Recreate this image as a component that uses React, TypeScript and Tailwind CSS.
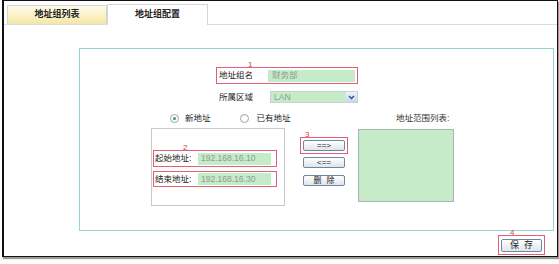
import React from 'react';

const font = "font-['Liberation_Sans','Noto_Sans_CJK_SC',sans-serif]";

const Mark: React.FC<{ n: string; className: string }> = ({ n, className }) => (
  <span className={`absolute text-[8px] leading-none text-[#e03a3a] ${className}`}>{n}</span>
);

const Btn: React.FC<{ children: React.ReactNode; className?: string }> = ({ children, className = '' }) => (
  <div
    className={`flex items-center justify-center rounded-[2px] border border-[#6f87a0] bg-gradient-to-b from-white to-[#dfe5ec] text-[8px] leading-none text-[#222] ${className}`}
  >
    {children}
  </div>
);

const Radio: React.FC<{ checked?: boolean }> = ({ checked }) => (
  <span className="flex h-[9px] w-[9px] items-center justify-center rounded-full border border-[#9aa3aa] bg-white">
    {checked && <span className="h-[3px] w-[3px] rounded-full bg-[#3aa040]" />}
  </span>
);

const App: React.FC = () => {
  return (
    <div className={`h-[264px] w-[559px] whitespace-nowrap bg-white ${font} text-[8.5px] text-[#222]`}>
      <div className="ml-[2px] h-[257px] w-[556px] border border-l-2 border-[#111] shadow-[1px_2px_1px_#9a9a9a]">
        {/* tabs */}
        <div className="flex h-[24px] items-end border-b border-[#dcdcdc] pl-[3px]">
          <div className="flex h-[19px] w-[100px] items-center justify-center border border-b-0 border-[#d4d4d4] bg-gradient-to-b from-[#fffcea] to-[#f3e7a6] text-[9px] font-bold">
            地址组列表
          </div>
          <div className="-mb-px flex h-[21px] w-[101px] items-center justify-center border border-b-0 border-[#d4d4d4] bg-white text-[9px] font-bold">
            地址组配置
          </div>
        </div>

        {/* form panel */}
        <div className="ml-[75px] mt-[23px] h-[183px] w-[475px] border border-[#96d3d3]">
          <div className="relative ml-[136px] mt-[18px] flex h-[17px] w-[142px] items-center border border-[#e0607a]">
            <Mark n="1" className="-top-[7px] left-[31px]" />
            <span className="w-[51px] pl-[2px]">地址组名</span>
            <div className="flex h-[12px] w-[87px] items-center bg-[#c6ebc8] pl-[4px] text-[#8a9c90]">财务部</div>
          </div>

          <div className="ml-[139px] mt-[7px] flex h-[12px] items-center">
            <span className="w-[51px]">所属区域</span>
            <div className="flex h-[12px] w-[88px] items-center border border-[#c5d6c8] bg-[#c6ebc8] pl-[3px] text-[#8a9c90]">
              <span className="flex-1">LAN</span>
              <span className="flex h-[10px] w-[11px] items-center justify-center bg-gradient-to-b from-[#eef3fb] to-[#c8d6ee]">
                <svg width="7" height="5" viewBox="0 0 7 5">
                  <path d="M1 1 L3.5 3.5 L6 1" fill="none" stroke="#2b4f8c" strokeWidth="1.4" />
                </svg>
              </span>
            </div>
          </div>

          <div className="mt-[10px] flex items-start">
            {/* left column */}
            <div className="ml-[71px] w-[134px]">
              <div className="flex h-[10px] items-center">
                <span className="ml-[19px]"><Radio checked /></span>
                <span className="ml-[6px]">新地址</span>
                <span className="ml-[29px]"><Radio /></span>
                <span className="ml-[8px]">已有地址</span>
              </div>
              <div className="mt-[5px] h-[78px] w-[134px] border border-[#c8c8c8] pt-[21px]">
                <div className="relative ml-px flex h-[17px] w-[124px] items-center border border-[#e0607a]">
                  <Mark n="2" className="-top-[7px] left-[29px]" />
                  <span className="w-[44px] pl-px">起始地址:</span>
                  <div className="flex h-[12px] w-[73px] items-center bg-[#c6ebc8] pl-[3px] text-[#8a9c90]">192.168.16.10</div>
                </div>
                <div className="ml-px mt-[4px] flex h-[16px] w-[124px] items-center border border-[#e0607a]">
                  <span className="w-[44px] pl-px">结束地址:</span>
                  <div className="flex h-[12px] w-[73px] items-center bg-[#c6ebc8] pl-[3px] text-[#8a9c90]">192.168.16.30</div>
                </div>
              </div>
            </div>

            {/* buttons */}
            <div className="ml-[15px] mt-[24px] w-[48px]">
              <div className="relative flex h-[17px] w-[48px] items-center justify-center border border-[#e0607a]">
                <Mark n="3" className="-top-[7px] left-[4px]" />
                <Btn className="h-[11px] w-[42px]">==&gt;</Btn>
              </div>
              <Btn className="ml-[3px] mt-[3px] h-[11px] w-[42px]">&lt;==</Btn>
              <Btn className="ml-[3px] mt-[7px] h-[11px] w-[42px] gap-[5px]"><span>删</span><span>除</span></Btn>
            </div>

            {/* right column */}
            <div className="ml-[10px] w-[96px]">
              <div className="flex h-[10px] items-center pl-[38px] text-[#333]">地址范围列表:</div>
              <div className="mt-[6px] h-[73px] w-[96px] border border-[#a9b6ad] bg-[#c6ebc8]" />
            </div>
          </div>
        </div>

        {/* save */}
        <div className="mt-[4px] flex justify-end pr-[12px]">
          <div className="relative flex h-[20px] w-[47px] items-center justify-center border border-[#e0607a]">
            <Mark n="4" className="-top-[7px] left-[11px]" />
            <Btn className="h-[13px] w-[41px] gap-[5px] text-[9px]"><span>保</span><span>存</span></Btn>
          </div>
        </div>
      </div>
    </div>
  );
};

export default App;
